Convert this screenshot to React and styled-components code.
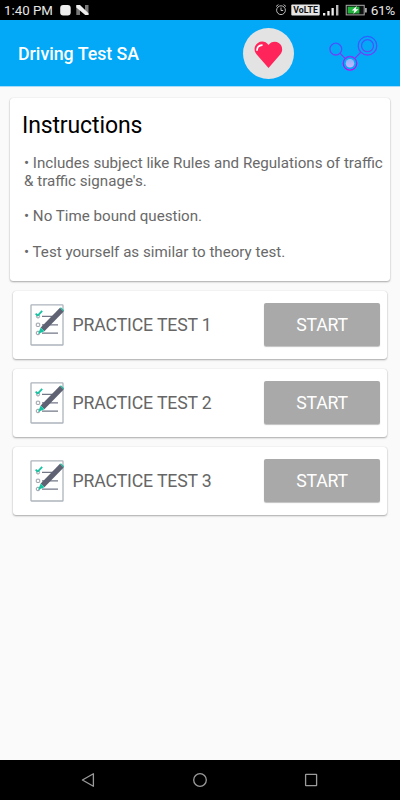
import styled, { createGlobalStyle } from "styled-components";

const GlobalStyle = createGlobalStyle`
  * {
    box-sizing: border-box;
  }

  body {
    margin: 0;
    font-family: Roboto, "Liberation Sans", sans-serif;
    background-color: #fafafa;
  }

  svg {
    display: block;
    flex: none;
  }
`;

const Screen = styled.div`
  display: flex;
  flex-direction: column;
  width: 400px;
  height: 800px;
  overflow: hidden;
  background-color: #fafafa;
`;

const StatusBar = styled.div`
  display: flex;
  align-items: center;
  height: 20px;
  padding: 0 5px 0 4px;
  background-color: #000;
  color: #e6e6e6;
`;

const Clock = styled.span`
  width: 56px;
  padding-top: 1px;
  font-size: 13.3px;
  line-height: 20px;
  white-space: nowrap;
`;

const StatusIcons = styled.div`
  margin-left: auto;
`;

const Battery = styled.span`
  width: 27px;
  font-size: 13.6px;
  line-height: 20px;
  letter-spacing: -0.3px;
  text-align: right;
`;

const AppBar = styled.header`
  display: flex;
  align-items: center;
  height: 67px;
  padding: 0 22px 0 18px;
  background-color: #03a9f7;
  border-bottom: 1px solid #a9dcf8;
`;

const AppTitle = styled.h1`
  flex: 1;
  margin: 0;
  padding-top: 1px;
  color: white;
  font-size: 17.75px;
  font-weight: 500;
  line-height: 24px;
`;

const HeartButton = styled.button`
  width: 51px;
  height: 51px;
  margin-right: 35px;
  padding: 0;
  border: none;
  border-radius: 50%;
  background-color: #e3e3e3;
`;

const Content = styled.main`
  flex: 1;
  padding: 11px 10px 0;
`;

const Card = styled.section`
  border-radius: 3px;
  background-color: white;
  box-shadow: 0 1px 2px rgba(0, 0, 0, 0.32), 0 0 1px rgba(0, 0, 0, 0.16);
`;

const InstructionsCard = styled(Card)`
  height: 183px;
  padding: 14px 0 0 12px;
`;

const Heading = styled.h2`
  margin: 0 0 15px;
  color: #000;
  font-size: 23px;
  font-weight: 400;
  line-height: 28px;
  letter-spacing: -0.12px;
`;

const Instruction = styled.p`
  margin: 0 0 17.8px 2px;
  color: #696969;
  font-size: 15.15px;
  line-height: 17.8px;
  white-space: pre-line;
`;

const TestCard = styled(Card)`
  display: flex;
  align-items: center;
  height: 68px;
  margin: 10px 3px 0;
  padding: 0 7px 0 17px;
`;

const TestName = styled.span`
  flex: 1;
  margin-left: 8.5px;
  padding-bottom: 1px;
  color: #666;
  font-size: 17.7px;
  line-height: 24px;
  letter-spacing: -0.15px;
`;

const StartButton = styled.button`
  width: 116px;
  height: 43px;
  margin-bottom: 1px;
  padding: 0;
  border: none;
  border-radius: 2px;
  background-color: #a9a9a9;
  color: white;
  font-family: inherit;
  font-size: 17.7px;
  letter-spacing: -0.2px;
  box-shadow: 0 1px 1px rgba(0, 0, 0, 0.25);
`;

const NavBar = styled.nav`
  height: 40px;
  background-color: #000;
`;

const instructions = [
  "• Includes subject like Rules and Regulations of traffic\n& traffic signage's.",
  "• No Time bound question.",
  "• Test yourself as similar to theory test.",
];

const tests = [1, 2, 3];

const NotificationIcons = () => (
  <svg width="30" height="20">
    <rect x="0.2" y="5" width="10.5" height="10.5" rx="3" fill="#eee" />
    <path d="M16.3 5 L20 8.5 V15 H16.3Z M25 5 H28.5 V15 L25 12Z" fill="#777" />
    <path d="M16.3 5 H20 L28.5 13.2 V15 H25.2 L16.3 7.5Z" fill="#eee" />
  </svg>
);

const SystemIcons = () => (
  <svg width="96" height="20" viewBox="272 0 96 20">
    <g fill="none" stroke="#bbb" strokeWidth="1">
      <circle cx="281" cy="10.2" r="4.4" />
      <path d="M281 7.5 V10.5 H283.2 M276 6.5 L278.4 4.6 M286 6.5 L283.6 4.6" />
    </g>
    <rect x="291.3" y="4.5" width="28.4" height="11" rx="1" fill="#e6e6e6" />
    <text
      x="293.3"
      y="13.2"
      fill="#111"
      fontSize="8.3"
      fontWeight="700"
      textLength="24.6"
      lengthAdjust="spacingAndGlyphs"
    >
      VoLTE
    </text>
    <path
      d="M323 13 H325.3 V15.5 H323Z M327.3 11 H329.6 V15.5 H327.3Z M331.5 8 H333.8 V15.5 H331.5Z"
      fill="#eee"
    />
    <rect x="336" y="5" width="2.4" height="10.5" fill="#bbb" />
    <rect x="346.2" y="5.3" width="18" height="9.6" fill="#111" stroke="#aaa" />
    <rect x="365" y="8" width="1.8" height="4.5" fill="#aaa" />
    <rect x="347.7" y="6.7" width="11.7" height="6.8" fill="#20b43c" />
    <path d="M357 5.8 L351.8 10.6 H354.5 L353.3 14 L358.5 9.3 H355.6Z" fill="#fff" />
  </svg>
);

const HeartIcon = () => (
  <svg width="51" height="51" viewBox="0 0 51 51">
    <path
      d="M25.5 17.1 C23 13.2 18.3 12.7 14.9 14.9 C10.7 17.6 10.7 23.1 13.5 26.2 L25.5 40 L37.2 26.4 C40.2 23.1 39.8 17.5 35.8 14.9 C32.4 12.8 27.7 13.5 25.5 17.1Z"
      fill="#ff2459"
    />
    <path
      d="M14 22.3 C14.1 19.2 15.9 17.4 19 17.1"
      fill="none"
      stroke="#fff"
      strokeWidth="1.6"
      strokeLinecap="round"
    />
  </svg>
);

const NodesIcon = () => (
  <svg width="49" height="36" viewBox="329 35 49 36">
    <defs>
      <linearGradient
        id="nodeStroke"
        gradientUnits="userSpaceOnUse"
        x1="0"
        y1="36"
        x2="0"
        y2="71"
      >
        <stop offset="0" stopColor="#2563ff" />
        <stop offset="0.5" stopColor="#6748f5" />
        <stop offset="1" stopColor="#d000ed" />
      </linearGradient>
      <linearGradient id="nodeFill" x1="0" y1="0" x2="0" y2="1">
        <stop offset="0" stopColor="#88b7fb" />
        <stop offset="1" stopColor="#d0afff" />
      </linearGradient>
    </defs>
    <g fill="none" stroke="url(#nodeStroke)" strokeWidth="1.3">
      <circle cx="335.8" cy="49.1" r="5.9" />
      <circle cx="367.5" cy="45.7" r="9.3" />
      <circle cx="367.5" cy="45.7" r="6" />
      <circle cx="350" cy="63.3" r="6.8" />
      <path d="M340 53.3 L345.1 58.4 M360.8 52.2 L354.8 58.4" />
    </g>
    <circle cx="350" cy="63.3" r="4.3" fill="url(#nodeFill)" />
  </svg>
);

const ChecklistIcon = () => (
  <svg width="34" height="42" viewBox="0 0 34 42">
    <rect
      x="1"
      y="0.9"
      width="32"
      height="40.1"
      rx="0.6"
      fill="#fff"
      stroke="#adb4bc"
      strokeWidth="1.3"
    />
    <path d="M12 12.3 H25 M12 20.8 H28 M12 29.1 H28" stroke="#737887" strokeWidth="1.2" />
    <g fill="#fff" stroke="#8c929c" strokeWidth="0.9">
      <circle cx="8" cy="12.4" r="1.6" />
      <rect x="6.3" y="19.2" width="3.4" height="3.2" rx="0.6" />
      <circle cx="8" cy="29" r="1.8" />
    </g>
    <path d="M5.6 9.6 L7.8 11.6 L12.2 6.9" fill="none" stroke="#14c3a2" strokeWidth="1.8" />
    <path d="M30 3.8 L33.7 7.4 L14.4 27.2 L10.7 23.4Z" fill="#5e6272" />
    <path d="M30 3.8 L31.2 3.4 L34 6.2 L33.7 7.4Z" fill="#14c3a2" />
    <path d="M10.7 23.4 L14.4 27.2 L7.9 30Z" fill="#14c3a2" />
  </svg>
);

const NavIcons = () => (
  <svg width="400" height="40" fill="none" stroke="#9b9b9b" strokeWidth="1.3">
    <path d="M93.4 13.7 V26.3 L82.4 20Z" strokeLinejoin="round" />
    <circle cx="200" cy="20" r="6.3" />
    <rect x="305.6" y="14.4" width="11" height="11.2" rx="0.4" />
  </svg>
);

const App = () => {
  return (
    <Screen>
      <GlobalStyle />
      <StatusBar>
        <Clock>1:40 PM</Clock>
        <NotificationIcons />
        <StatusIcons>
          <SystemIcons />
        </StatusIcons>
        <Battery>61%</Battery>
      </StatusBar>
      <AppBar>
        <AppTitle>Driving Test SA</AppTitle>
        <HeartButton aria-label="Favourite">
          <HeartIcon />
        </HeartButton>
        <NodesIcon />
      </AppBar>
      <Content>
        <InstructionsCard>
          <Heading>Instructions</Heading>
          {instructions.map((text) => (
            <Instruction key={text}>{text}</Instruction>
          ))}
        </InstructionsCard>
        {tests.map((number) => (
          <TestCard key={number}>
            <ChecklistIcon />
            <TestName>PRACTICE TEST {number}</TestName>
            <StartButton>START</StartButton>
          </TestCard>
        ))}
      </Content>
      <NavBar>
        <NavIcons />
      </NavBar>
    </Screen>
  );
};

export default App;
